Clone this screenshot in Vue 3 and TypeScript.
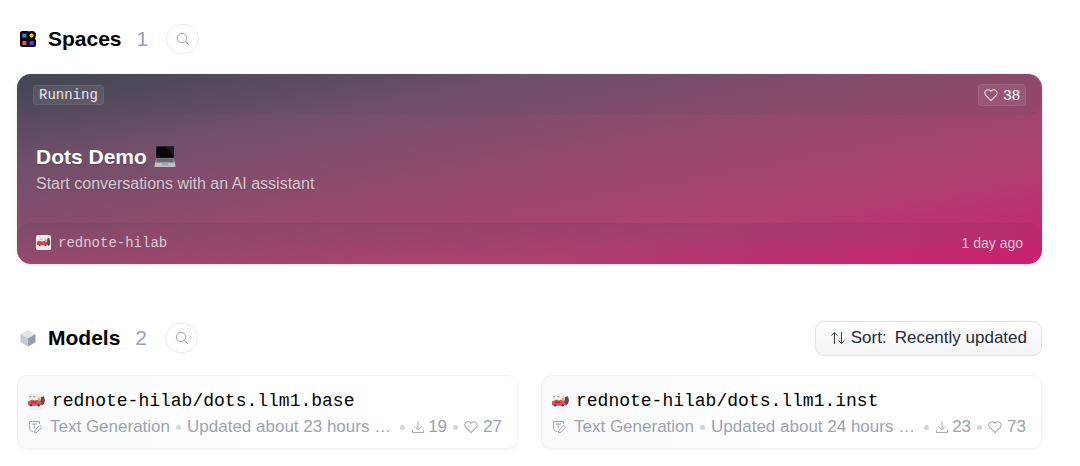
<script setup lang="ts">
interface Model {
  name: string
  task: string
  updated: string
  downloads: number
  likes: number
}

const models: Model[] = [
  { name: 'rednote-hilab/dots.llm1.base', task: 'Text Generation', updated: 'Updated about 23 hours …', downloads: 19, likes: 27 },
  { name: 'rednote-hilab/dots.llm1.inst', task: 'Text Generation', updated: 'Updated about 24 hours …', downloads: 23, likes: 73 },
]

const heart =
  'M22.5 4c-2 0-3.9.8-5.3 2.2L16 7.4l-1.1-1.1C12 3.3 7.2 3.3 4.3 6.2c-3 3-3 7.8 0 10.8L16 29l11.8-11.9c3-3 3-7.8 0-10.8C26.4 4.8 24.5 4 22.5 4z'
</script>

<template>
  <main class="page">
    <section>
      <header class="heading">
        <svg class="heading-icon" viewBox="0 0 18 18" aria-hidden="true">
          <path d="M3.5 1H9l1 .5L11.500 1H13a4 4 0 0 1 3.400 6.300L15.800 9l1.200 1v4.500a2.500 2.500 0 0 1-2.500 2.500h-11A2.500 2.500 0 0 1 1 14.500v-11A2.500 2.500 0 0 1 3.500 1z" fill="#050505" />
          <rect x="3.3" y="3.6" width="4.2" height="4" fill="#3b82f6" />
          <circle cx="12.6" cy="5.6" r="2.1" fill="#facc15" />
          <rect x="3.3" y="11" width="4.2" height="4" fill="#e8476b" />
          <rect x="10.6" y="11" width="4.2" height="4" fill="#7c2df0" />
        </svg>
        <h2>Spaces</h2>
        <span class="count">1</span>
        <button class="search" type="button" aria-label="Search spaces">
          <svg viewBox="0 0 14 14" aria-hidden="true"><circle cx="6" cy="6" r="4.7" /><path d="M9.5 9.5l3.5 3.5" /></svg>
        </button>
      </header>

      <article class="space">
        <div class="space-top">
          <span class="badge status">Running</span>
          <button class="badge likes" type="button" aria-label="38 likes">
            <svg viewBox="0 0 32 32" aria-hidden="true"><path :d="heart" /></svg>38
          </button>
        </div>
        <div class="space-body">
          <h3>
            Dots Demo
            <svg class="laptop" viewBox="0 0 22 22" aria-hidden="true">
              <defs>
                <linearGradient id="keys" x1="0" y1="0" x2="0" y2="1">
                  <stop offset="0" stop-color="#777" />
                  <stop offset="1" stop-color="#aaa" />
                </linearGradient>
              </defs>
              <path d="M2 0h18v13H2z" fill="#35363a" />
              <path d="M2.500 .8h17v11h-17z" fill="#08090a" />
              <path d="M12 .8h7.500v9z" fill="#1c1d20" />
              <path d="M2 12h18l1 5H1z" fill="url(#keys)" />
              <path d="M3 12.800h16l.6 3.400H2.400z" fill="#66686b" />
              <path d="M1 17h20l.6 4H.4z" fill="#bfc0c2" />
              <path d="M8 17h6l.5 2.500h-7z" fill="#a4a5a8" />
            </svg>
          </h3>
          <p>Start conversations with an AI assistant</p>
        </div>
        <footer class="space-foot">
          <a class="owner" href="#rednote-hilab">
            <svg class="avatar" viewBox="0 0 16 16" aria-hidden="true">
              <rect width="16" height="16" rx="2" fill="#eeeceb" />
              <path d="M1 7l3-1 2 1 4-1 3 1v3l-3 1H2l-1-1z" fill="#ce4750" />
              <path d="M12 4l2-1 1 3v4l-2 2-1-3z" fill="#594a4c" />
              <path d="M4 4h3v1H4z" fill="#a8b49e" />
              <path d="M9 5l2-1 1 3-2 1z" fill="#dc9c8c" />
              <circle cx="4" cy="11" r="1" fill="#484346" />
              <circle cx="10" cy="11" r="1" fill="#484346" />
            </svg>
            rednote-hilab
          </a>
          <time>1 day ago</time>
        </footer>
      </article>
    </section>

    <section class="models">
      <header class="heading">
        <svg class="heading-icon" viewBox="0 0 18 18" aria-hidden="true">
          <path d="M9 1l7.5 4L9 9.2 1.5 5z" fill="#e2e5ea" />
          <path d="M1.5 5L9 9.2V17.5L1.5 13.2z" fill="#c6cad2" />
          <path d="M16.5 5L9 9.2V17.5l7.5-4.3z" fill="#979dab" />
        </svg>
        <h2>Models</h2>
        <span class="count">2</span>
        <button class="search" type="button" aria-label="Search models">
          <svg viewBox="0 0 14 14" aria-hidden="true"><circle cx="6" cy="6" r="4.7" /><path d="M9.5 9.5l3.5 3.5" /></svg>
        </button>
        <button class="sort" type="button">
          <svg viewBox="0 0 16 14" aria-hidden="true"><path d="M4.500 13V1.500M1.500 4.500l3-3 3 3M11.500 1v11.500M8.500 9.500l3 3 3-3" /></svg>
          <span>Sort:</span>
          <span class="sort-value">Recently updated</span>
        </button>
      </header>

      <div class="grid">
        <a v-for="model in models" :key="model.name" class="model" :href="'#' + model.name">
          <h4>
            <svg class="avatar" viewBox="0 0 16 16" aria-hidden="true">
              <rect width="16" height="16" rx="5" fill="#f3f2f2" />
              <path d="M0 8l4-2 2 1 4-1 3 1v4l-3 1H1l-1-1z" fill="#d6525a" />
              <path d="M12 4l3-1 1 4-1 3-2 2-1-4z" fill="#5e4b4c" />
              <path d="M1 4l2-1M5 3l2 1" stroke="#9a9690" fill="none" />
              <path d="M9 5l2-1 1 3-2 1z" fill="#dfa391" />
              <path d="M3 8h5v1.500H3z" fill="#a92f3b" />
              <circle cx="3" cy="11.5" r="1.1" fill="#514447" />
              <circle cx="10" cy="11.5" r="1.1" fill="#514447" />
            </svg>
            {{ model.name }}
          </h4>
          <div class="meta">
            <svg class="icon task" viewBox="0 0 14 14" aria-hidden="true">
              <path d="M5.500 11.500H4L1.500 9.200V1.500h10V4M3.800 4h5M6.300 4v4.500M6.500 13l.5-2.800 4.800-4.800 2 1.800L9 12.200z" />
            </svg>
            <span>{{ model.task }}</span>
            <i class="dot"></i>
            <span class="updated">{{ model.updated }}</span>
            <i class="dot late"></i>
            <svg class="icon" viewBox="0 0 14 14" aria-hidden="true"><path d="M7 1v8.500M3.500 6.300L7 9.800l3.500-3.500M1.500 10v2.500h11V10" /></svg>
            <span>{{ model.downloads }}</span>
            <i class="dot"></i>
            <svg class="icon heart" viewBox="0 0 32 32" aria-hidden="true"><path :d="heart" /></svg>
            <span>{{ model.likes }}</span>
          </div>
        </a>
      </div>
    </section>
  </main>
</template>

<style>
body {
  margin: 0;
  background: #fff;
}
</style>

<style scoped>
.page {
  box-sizing: border-box;
  padding: 22px 38px 18px 17px;
  font-family: "Liberation Sans", Arial, sans-serif;
  font-size: 16px;
  color: #1f2937;
}

h2, h3, h4, p {
  margin: 0;
}

button {
  font: inherit;
}

svg {
  display: block;
  flex: none;
}

.heading {
  display: flex;
  align-items: center;
  height: 34px;
}

.heading-icon {
  width: 18px;
  height: 18px;
  margin: 0 11px 0 2px;
}

h2 {
  font-size: 21px;
  line-height: 28px;
  color: #000;
}

.count {
  margin: 0 18px 0 15px;
  font-size: 21px;
  line-height: 28px;
  color: #9ca3af;
}

.search {
  display: grid;
  place-items: center;
  width: 33px;
  height: 30px;
  padding: 0;
  border: 1px solid #e9eaec;
  border-radius: 16px;
  background: #fff;
}

.search svg {
  width: 14px;
  height: 14px;
  fill: none;
  stroke: #9ca3af;
}

.space {
  display: flex;
  flex-direction: column;
  margin-top: 18px;
  overflow: hidden;
  border-radius: 14px;
  background: linear-gradient(to bottom right, #3f4651, #71506a 25%, #964a6d 50%, #b03f70 75%, #d01c70);
  box-shadow: 0 1px 3px rgba(0, 0, 0, 0.15);
  color: #fff;
}

.space-top,
.space-foot {
  display: flex;
  align-items: center;
  justify-content: space-between;
  height: 41px;
  box-sizing: border-box;
  border-radius: 14px;
}

.space-top {
  padding: 0 16px;
  background: rgba(75, 70, 90, 0.12);
}

.badge {
  box-sizing: border-box;
  height: 20px;
  padding: 0 5px;
  border: 1px solid rgba(255, 255, 255, 0.07);
  border-radius: 4px;
  background: rgba(255, 255, 255, 0.08);
  color: #fff;
}

.status {
  font-family: "Liberation Mono", monospace;
  font-size: 14px;
  line-height: 18px;
  color: #e5e5ea;
}

.likes {
  display: flex;
  align-items: center;
  gap: 5px;
  height: 22px;
  font-size: 15px;
}

.likes svg {
  width: 14px;
  height: 14px;
  fill: none;
  stroke: #e9d9e1;
  stroke-width: 2.4;
}

.space-body {
  box-sizing: border-box;
  height: 108px;
  padding: 28px 19px 0;
  text-shadow: 0 1px 2px rgba(0, 0, 0, 0.2);
}

h3 {
  display: flex;
  align-items: center;
  gap: 7px;
  font-size: 21px;
  line-height: 28px;
}

.laptop {
  width: 22px;
  height: 22px;
}

.space-body p {
  line-height: 26px;
  color: #d5cbd3;
}

.space-foot {
  padding: 0 19px 2px;
  background: linear-gradient(to bottom, rgba(75, 60, 85, 0.14), rgba(75, 60, 85, 0));
  color: #ddc8d4;
  font-size: 14px;
}

.owner {
  display: flex;
  align-items: center;
  gap: 7px;
  color: inherit;
  font-family: "Liberation Mono", monospace;
  text-decoration: none;
}

.space-foot .avatar {
  width: 15px;
  height: 15px;
}

.models {
  margin-top: 57px;
}

.sort {
  display: flex;
  align-items: center;
  box-sizing: border-box;
  height: 35px;
  margin-left: auto;
  padding: 0 14px;
  border: 1px solid #e1e3e7;
  border-radius: 9px;
  background: linear-gradient(to bottom, #fff, #f3f4f6);
  color: #1f2937;
  font-size: 17px;
}

.sort svg {
  width: 16px;
  height: 14px;
  margin-right: 5px;
  fill: none;
  stroke: #374151;
}

.sort-value {
  margin-left: 8px;
}

.grid {
  display: grid;
  grid-template-columns: 1fr 1fr;
  gap: 23px;
  margin-top: 20px;
}

.model {
  box-sizing: border-box;
  min-width: 0;
  padding: 12px 15px 8px 10px;
  border: 1px solid #f0f1f3;
  border-radius: 10px;
  background: linear-gradient(to right, #f9fafb, #fff 50%);
  box-shadow: 0 1px 2px rgba(0, 0, 0, 0.05);
  color: #000;
  text-decoration: none;
}

h4 {
  display: flex;
  align-items: center;
  gap: 7px;
  font-family: "Liberation Mono", monospace;
  font-size: 18px;
  font-weight: 400;
  line-height: 26px;
  white-space: nowrap;
}

h4 .avatar {
  width: 17px;
  height: 17px;
}

.meta {
  display: flex;
  align-items: center;
  font-size: 17px;
  line-height: 26px;
  color: #9ca3af;
  white-space: nowrap;
}

.icon {
  width: 14px;
  height: 14px;
  margin-right: 3px;
  fill: none;
  stroke: #a3a9b5;
}

.task {
  margin-right: 8px;
}

.heart {
  margin-right: 5px;
  stroke-width: 2.4;
}

.dot {
  flex: none;
  width: 5px;
  height: 5px;
  margin: 0 6px;
  border-radius: 50%;
  background: #d1d5db;
}

.updated {
  min-width: 0;
  overflow: hidden;
  text-overflow: ellipsis;
}

.late {
  margin-left: auto;
}
</style>
